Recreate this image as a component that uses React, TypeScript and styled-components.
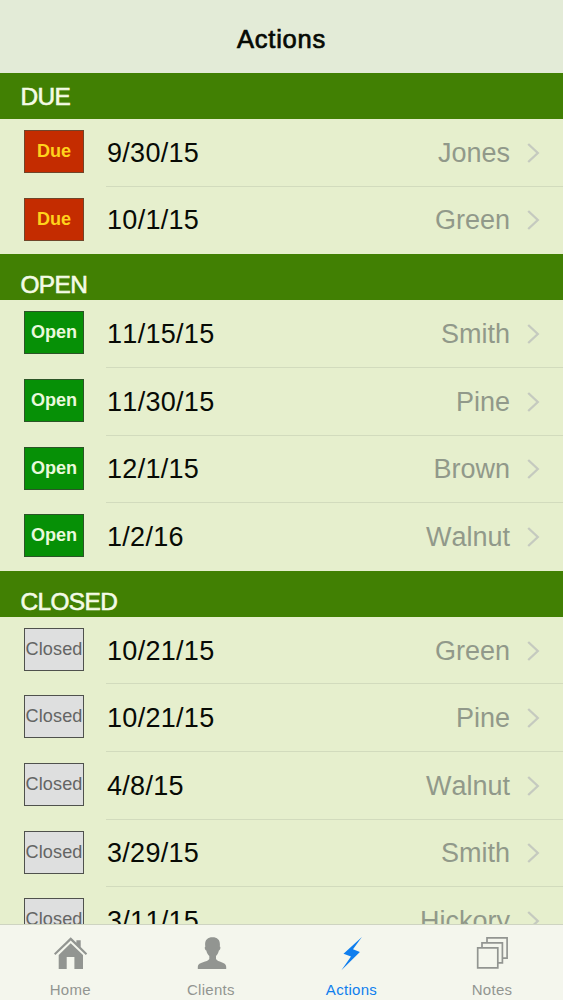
import React from "react";
import styled, { createGlobalStyle } from "styled-components";

const GlobalStyle = createGlobalStyle`
  * { box-sizing: border-box; }
  html, body { margin: 0; height: 100%; overflow: hidden; }
  body { font-family: "Liberation Sans", Arial, Helvetica, sans-serif; font-kerning: none; background: #e6efce; }
`;

const Screen = styled.div`
  display: flex;
  flex-direction: column;
  width: 563px;
  height: 1000px;
  overflow: hidden;
  background: #e6efcd;
`;

const NavBar = styled.header`
  flex: none;
  display: flex;
  align-items: center;
  justify-content: center;
  height: 73px;
  padding-top: 5px;
  background: #e3ebd7;
`;

const Title = styled.h1`
  margin: 0;
  font-size: 25.5px;
  line-height: 30px;
  font-weight: 400;
  letter-spacing: 0.75px;
  color: #060a04;
  -webkit-text-stroke: 0.7px #060a04;
`;

const List = styled.main`
  flex: 1;
  min-height: 0;
  overflow: hidden;
`;

const SectionHeader = styled.h2<{ $top: number }>`
  margin: 0;
  height: 46.1px;
  padding: ${(p) => p.$top}px 0 0 20.5px;
  background: #418003;
  color: #f4fbe6;
  font-size: 24.4px;
  line-height: 28px;
  font-weight: 400;
  letter-spacing: -0.6px;
  -webkit-text-stroke: 0.6px #f4fbe6;
`;

const Row = styled.div`
  display: flex;
  height: 67.6px;
  padding-left: 24px;
`;

const tones = {
  Due: { bg: "#c42c00", fg: "#ffd21c", edge: "#70452a", weight: 700, spacing: 0 },
  Open: { bg: "#069006", fg: "#e9f9dc", edge: "#2b5527", weight: 700, spacing: 0 },
  Closed: { bg: "#dedfdf", fg: "#646564", edge: "#4f514d", weight: 400, spacing: 0.1 },
};
type Status = keyof typeof tones;

const Badge = styled.span<{ $status: Status }>`
  flex: none;
  display: flex;
  justify-content: center;
  width: 60px;
  height: 43px;
  margin-top: 11px;
  border: 1px solid ${(p) => tones[p.$status].edge};
  background: ${(p) => tones[p.$status].bg};
  color: ${(p) => tones[p.$status].fg};
  font-size: 18.1px;
  font-weight: ${(p) => tones[p.$status].weight};
  letter-spacing: ${(p) => tones[p.$status].spacing}px;
  line-height: 41px;
  white-space: nowrap;
`;

const RowBody = styled.div<{ $last: boolean }>`
  flex: 1;
  display: flex;
  align-items: center;
  margin-left: 22px;
  padding: 0.8px 23px 0 0;
  border-bottom: 1px solid ${(p) => (p.$last ? "transparent" : "#d2dbbd")};
  font-size: 27px;
  line-height: 32px;
`;

const DateText = styled.span`
  flex: 1;
  padding-left: 1px;
  letter-spacing: 0.3px;
  color: #070a05;
`;

const Name = styled.span`
  color: #91998a;
  margin-right: 17px;
`;

const Chevron = styled.svg`
  width: 13px;
  height: 20px;
  fill: none;
  stroke: #c5cabf;
  stroke-width: 2.3;
`;

const TabBar = styled.nav`
  flex: none;
  display: grid;
  grid-template-columns: repeat(4, 140.6px);
  height: 76px;
  border-top: 1px solid #ced4c1;
  background: #f4f6ed;
`;

const Tab = styled.div<{ $active?: boolean }>`
  display: flex;
  flex-direction: column;
  align-items: center;
  padding-top: 10px;
  color: ${(p) => (p.$active ? "#0f7eee" : "#929591")};
  svg { width: 36px; height: 36px; display: block; }
`;

const TabLabel = styled.span`
  margin-top: 10px;
  font-size: 15px;
  line-height: 18px;
  letter-spacing: 0.3px;
`;

const HomeIcon = () => (
  <svg viewBox="0 0 36 36" fill="currentColor">
    <path d="M18.7 8.2 31 20V34H22.4V22H14.7V34H6.7V20Z" />
    <path d="M2 18.6 18.7 2.3 24.4 7.8V5.3H28.7V12L35.2 18.6 33.8 20 18.7 5.4 3.4 20Z" />
  </svg>
);

const PersonIcon = () => (
  <svg viewBox="0 0 36 36" fill="currentColor">
    <path d="M19.5 2.3C24.2 2.3 26.9 5 26.9 9.2C26.9 10.2 26.9 10.9 26.8 11.5C28 12 27.3 15 25.9 15.5C25.3 18 24.3 19.8 23 21V24C24.5 27.3 33 26.6 33.2 31.8V34H4.8V31.8C5 26.6 14.8 27.3 16.3 24V21C15 19.8 13.8 18 13.3 15.5C11.9 15 11.2 12 12.4 11.5C12.2 10.9 12.1 10.2 12.1 9.2C12.1 5 14.8 2.3 19.5 2.3Z" />
  </svg>
);

const BoltIcon = () => (
  <svg viewBox="0 0 36 36" fill="currentColor">
    <path d="M28.9 2 10.5 18.7 18 21.6 8.4 35.2 26.9 17 20 14.2Z" />
  </svg>
);

const NotesIcon = () => (
  <svg viewBox="0 0 36 36" fill="none" stroke="currentColor" strokeWidth="1.7">
    <path d="M3.7 12.9H23.8V32.9H3.7Z" />
    <path d="M8 12.9V7.9H28.4V27.9H23.8" />
    <path d="M13 7.9V2.9H33.1V23.1H28.4" />
  </svg>
);

type Section = { title: string; top: number; status: Status; rows: [string, string][] };
const sections: Section[] = [
  { title: "DUE", top: 10, status: "Due", rows: [["9/30/15", "Jones"], ["10/1/15", "Green"]] },
  {
    title: "OPEN", top: 17.2, status: "Open",
    rows: [["11/15/15", "Smith"], ["11/30/15", "Pine"], ["12/1/15", "Brown"], ["1/2/16", "Walnut"]],
  },
  {
    title: "CLOSED", top: 17.2, status: "Closed",
    rows: [["10/21/15", "Green"], ["10/21/15", "Pine"], ["4/8/15", "Walnut"], ["3/29/15", "Smith"], ["3/11/15", "Hickory"]],
  },
];

export default function App() {
  return (
    <Screen>
      <GlobalStyle />
      <NavBar><Title>Actions</Title></NavBar>
      <List>
        {sections.map((s) => (
          <section key={s.title}>
            <SectionHeader $top={s.top}>{s.title}</SectionHeader>
            {s.rows.map(([date, name], i) => (
              <Row key={i}>
                <Badge $status={s.status}>{s.status}</Badge>
                <RowBody $last={i === s.rows.length - 1}>
                  <DateText>{date}</DateText>
                  <Name>{name}</Name>
                  <Chevron viewBox="0 0 13 20"><path d="M1.2 1 10.8 10 1.2 19" /></Chevron>
                </RowBody>
              </Row>
            ))}
          </section>
        ))}
      </List>
      <TabBar>
        <Tab><HomeIcon /><TabLabel>Home</TabLabel></Tab>
        <Tab><PersonIcon /><TabLabel>Clients</TabLabel></Tab>
        <Tab $active><BoltIcon /><TabLabel>Actions</TabLabel></Tab>
        <Tab><NotesIcon /><TabLabel>Notes</TabLabel></Tab>
      </TabBar>
    </Screen>
  );
}
